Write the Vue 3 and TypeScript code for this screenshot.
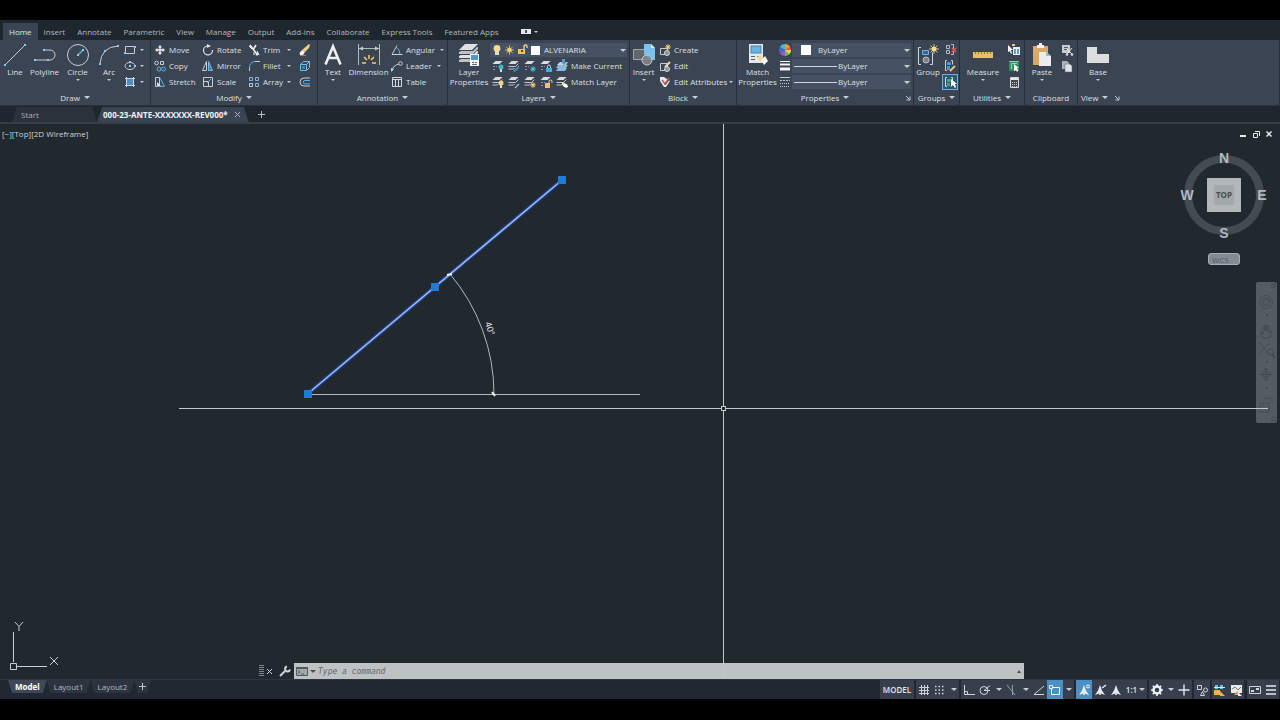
<script setup lang="ts">
import { h, ref } from 'vue'

interface Tool { icon: string; label?: string; title?: string; caret?: boolean; end?: boolean; active?: boolean }
interface Column { big?: { icon: string; lines: string[]; caret?: boolean }; rows?: Tool[][]; combos?: string[] }
interface Panel { name: string; cls: string; more?: boolean; launcher?: boolean; cols: Column[] }

const stack = '<path fill="#d9dcdf" d="M5.500 3h7l-3 3h-7z"/><path fill="none" stroke="#c3c7cb" d="M2.500 8.500h7l3-3M2.500 11h5l1-1"/>'
const leaf = '<path fill="#d9dcdf" d="M5.500 3h7l-3 3h-7z"/><path stroke="#8f969f" fill="none" d="M3 8.500h4M3 11.500h3" stroke-dasharray="2 1"/>'
const grips = (pts: number[][]) => pts.map(([x, y]) => `<rect x="${x - 1}" y="${y - 1}" width="2" height="2" fill="#8cc8f0"/>`).join('')
const sun = (x: number, y: number, r: number, c = '#f4cf6d') =>
  `<circle cx="${x}" cy="${y}" r="${r}" fill="${c}"/><path stroke="${c}" stroke-width=".800" d="M${x - r * 2} ${y}h${r * 4}M${x} ${y - r * 2}v${r * 4}M${x - r * 1.4} ${y - r * 1.4}l${r * 2.8} ${r * 2.8}M${x + r * 1.4} ${y - r * 1.4}l${-r * 2.8} ${r * 2.8}"/>`
const compassA = '<path fill="#e6eaee" d="M8 3L10 8.500L13 13L8.800 11.500V13H7.200V11.500L3 13L6 8.500z"/>'

const art: Record<string, string> = {
  line: '<path stroke="#c8cdd2" d="M2 22L22 2"/>' + grips([[2, 22], [22, 2]]),
  polyline: '<path stroke="#c8cdd2" fill="none" d="M2 17H17a5 5 0 0 0 0-10H11"/>' + grips([[2, 17], [15, 17], [11, 7]]),
  circle: '<circle cx="12" cy="12" r="10.500" stroke="#c8cdd2" fill="none"/><path stroke="#59b0e8" stroke-width="1.500" d="M12 12l5-5"/>' + grips([[12, 12], [17, 7]]),
  arc: '<path stroke="#c8cdd2" fill="none" d="M3 21Q4 4 21 3"/>' + grips([[3, 21], [8, 8], [21, 3]]),
  rect: '<path stroke="#c8cdd2" fill="none" d="M3.500 4.500h9v7h-9z"/>' + grips([[3, 11], [13, 5]]),
  ellipse: '<ellipse cx="8" cy="8" rx="5" ry="3.500" stroke="#c8cdd2" fill="none"/>' + grips([[8, 8], [13, 8], [8, 4]]),
  hatch: '<path fill="#4c8fc0" d="M5 5h6v6H5z"/><path stroke="#c8d8e4" fill="none" d="M4.500 3v10M11.500 3v10M3 4.500h10M3 11.500h10"/>',
  move: '<path stroke="#eef0f2" stroke-width="1.400" d="M8 4v8M4 8h8"/><path fill="#eef0f2" d="M8 3l2 2.500H6zM8 13l2-2.500H6zM3 8l2.500-2v4zM13 8l-2.500-2v4z"/>',
  copy: '<g fill="none" stroke="#c8cdd2"><circle cx="4.500" cy="5" r="1.800"/><path d="M8.500 3.500h3v3h-3z"/></g><g fill="none" stroke="#59b0e8"><circle cx="7" cy="11" r="2"/><circle cx="11.500" cy="11" r="2"/></g>',
  stretch: '<path fill="none" stroke="#c8cdd2" d="M3.500 3.500h4v9h-4z"/><path fill="none" stroke="#59b0e8" d="M8 4l4.500 8.500H5"/><path fill="#dfe3e6" d="M5 8l4 4H5z"/>',
  rotate: '<path fill="none" stroke="#dfe3e6" stroke-width="1.200" d="M12.500 8A4.500 4.500 0 1 1 7 4"/><path fill="#dfe3e6" d="M7 2l4 2-4 2z"/>',
  mirror: '<path fill="none" stroke="#c8cdd2" d="M6.500 3.500v9h-4z"/><path fill="#3b83bd" stroke="#78bde9" d="M8.500 3.500v9h4z"/>',
  scale: '<path fill="none" stroke="#c8cdd2" d="M3.500 3.500h9v9h-9z"/><path fill="none" stroke="#c8cdd2" d="M3.500 7.500h5v5"/><path stroke="#59b0e8" d="M7 9l4-4"/>',
  trim: '<path stroke="#eef0f2" stroke-width="1.600" fill="none" d="M4 3l6 8M10 3L7 8"/><path stroke="#eef0f2" fill="none" d="M3 4l3 3M8 10v3M11 9l2 4"/><circle cx="11" cy="12" r="1.500" fill="#eef0f2"/>',
  fillet: '<path fill="none" stroke="#c8cdd2" d="M3.500 13V9M9 3.500h5"/><path fill="none" stroke="#59b0e8" d="M3.500 10Q3.500 4 9 3.500"/>',
  array: '<g fill="none" stroke="#7eb9de"><path d="M3.500 3.500h3v3h-3zM9.500 3.500h3v3h-3zM9.500 9.500h3v3h-3z"/><path stroke="#c8cdd2" d="M3.500 9.500h3v3h-3z"/></g>',
  erase: '<path fill="#f3d081" d="M12 2l1 1-1 3-4 4-3-2z"/><path fill="#f6f2ec" d="M5 8l3 2-2 3H3l-.500-2z"/><path stroke="#d96a4d" d="M3 13.500h6"/>',
  explode: '<path fill="none" stroke="#78bde9" d="M3.500 6.500h6v6h-6zM3.500 6.500l3-3h6l-3 3M12.500 3.500v6l-3 3"/><path fill="#3b83bd" d="M5 8h3v3H5z"/>',
  offset: '<path fill="none" stroke="#c8cdd2" d="M13 4H7a4 4 0 0 0 0 8h6"/><path fill="none" stroke="#59b0e8" d="M13 6.500H8a1.700 1.700 0 0 0 0 3.400h5"/>',
  text: '<path fill="none" stroke="#eef0f2" stroke-width="2.600" d="M4.500 21.500L12 3.500L19.500 21.500M7 15h10"/>',
  dimension: '<path stroke="#a9c3b0" fill="none" d="M1.500 1v21M22.500 1v21M2 5.500h20"/><path fill="#c8cdd2" d="M2 5.500l4-2v4zM22 5.500l-4-2v4z"/><path stroke="#f4cf6d" stroke-width="1.500" d="M5 20h4M19 20h-4M7 14l3 3M17 14l-3 3M12 12v4"/>',
  angular: '<path fill="none" stroke="#c8cdd2" d="M13.500 12.500H3l5-9"/><path fill="none" stroke="#59b0e8" d="M7 5Q11 7 11 12"/>',
  leader: '<path fill="none" stroke="#c8cdd2" d="M3 13Q4 7 10 6"/><circle cx="11.500" cy="5.500" r="1.800" fill="none" stroke="#c8cdd2"/><path fill="#c8cdd2" d="M2 14V10l3 1z"/>',
  table: '<path fill="none" stroke="#d5d9dc" d="M3.500 3.500h9v9h-9zM3.500 5.500h9M6.500 5.500v7M9.500 5.500v7"/>',
  layerprops: '<path fill="#dfe1e3" d="M8 1h13l-6 6H2z"/><path fill="#bec2c6" d="M2 9l2-1h12l4-4h1v2l-5 5H2z"/><path fill="#dfe1e3" d="M2 13l2-1h12l4-4h1v2l-5 5H2z"/><path fill="#bec2c6" d="M2 17l2-1h9v3H2z"/><rect x="13" y="11" width="9" height="12" fill="#f3f5f6"/><rect x="14" y="12" width="7" height="5" fill="#4b9bd3"/><path stroke="#65717c" d="M15 19.500h2M18 19.500h2M15 21.500h5"/>',
  bulb: '<circle cx="7" cy="6.500" r="3.400" fill="#f7dc8b"/><path fill="#f7dc8b" d="M5 9h4v2H5z"/><path fill="#d8d8d4" d="M5 11h4v2H5z"/>',
  sun: sun(6.5, 8, 2.3),
  unlock: '<path fill="#f2c35d" d="M2 7h7v5H2z"/><path stroke="#f2d48c" stroke-width="1.300" fill="none" d="M8 7V4.500a1.500 1.500 0 0 1 3 0V6"/><path fill="#4e4636" d="M5 8h2v2H5z"/>',
  layoff: leaf + '<circle cx="11" cy="9" r="2.500" fill="#35b7d6"/><path fill="#d9dcdf" d="M10 11h2v3h-2z"/>',
  layiso: stack + '<path fill="#3f89bd" d="M7 13l6-6v3l-4 4z"/>',
  layfrz: leaf + sun(11, 11, 1.500, '#42c5dc'),
  laylock: leaf + '<path fill="#37b4e0" d="M8 10h6v4H8z"/><path stroke="#b7e1f0" fill="none" d="M9.500 10V8.500a1.500 1.500 0 0 1 3 0V10"/>',
  makecur: '<path fill="#8ab9db" d="M4 10h9l-2 3H2zM4 7h10l-2 3H2z"/><path fill="#c6d3dd" d="M6 4h8l-2 3H3z"/><path fill="#5297c7" d="M8 1h3v3h2l-3 3-3-3h1z"/>',
  layon: stack + '<circle cx="11" cy="9" r="2.500" fill="#f7d577"/><path fill="#d9dcdf" d="M10 11h2v3h-2z"/>',
  layuniso: stack + '<path stroke="#85bde2" stroke-width="1.500" d="M9 14l4-4"/>',
  laythaw: stack + sun(11, 11, 1.500),
  layunlock: leaf + '<path fill="#f2c35d" d="M7 9h5v5H7z"/><path stroke="#f2d48c" fill="none" d="M11 9V7.500a1.500 1.500 0 0 1 3 0V9"/>',
  matchlay: stack + '<path fill="#f3e3b5" d="M8 8l3 1 3 4-2 1-4-3z"/><path fill="#fff" d="M9 11l4-1 1 3h-4z"/>',
  insert: '<path fill="#62666d" stroke="#a3a7ac" d="M1.500 6.500h15v10h-15z"/><path fill="#7cc0ee" d="M12 1h7l4 4v12h-5l-6-6z"/><path fill="#d7e9f5" d="M19 1l4 4h-4z"/><circle cx="15" cy="17" r="5" fill="#83878c" fill-opacity=".85" stroke="#c8cbce"/>',
  create: '<path fill="none" stroke="#c8cdd2" d="M3.500 6.500h7v6h-7z"/><circle cx="10" cy="11" r="2.500" fill="#8c9299" stroke="#d2d5d8"/>' + sun(11, 5, 1.5),
  edit: '<path fill="none" stroke="#c8cdd2" d="M3.500 5.500h7v7h-7z"/><circle cx="10" cy="11" r="2.500" fill="#8c9299" stroke="#d2d5d8"/><path stroke="#ead9ae" stroke-width="2" d="M8 9l5-5"/>',
  attrs: '<path fill="#e9ebed" d="M3 3h4l6 4-4 6H7L3 7z"/><path stroke="#bf5a4a" stroke-width="1.500" fill="none" d="M5 6l3 4 4-6"/><path stroke="#4b515b" d="M8 11l4-5"/>',
  matchprop: '<rect x="3" y="1" width="14" height="19" fill="#e5e8ea"/><rect x="5" y="3" width="10" height="7" fill="#69b4e6" stroke="#4585b0"/><path stroke="#59636d" d="M5 13.500h4M11 13.500h4M5 16.500h4"/><path fill="#f2d48c" d="M11 14l3-2 4 4-3 3z"/><path fill="#fafafa" d="M15 17l4-4 3 5-4 4z"/>',
  wheel: '<path fill="#ef4f45" d="M7 7L12 3.700A6 6 0 0 1 13 7z"/><path fill="#f39b31" d="M7 7V1a6 6 0 0 1 5.200 3z"/><path fill="#43b8e1" d="M7 7L1.800 4A6 6 0 0 1 7 1z"/><path fill="#3f6fd5" d="M7 7l-5.200 3a6 6 0 0 1 0-6z"/><path fill="#a156c4" d="M7 7v6a6 6 0 0 1-5.200-3z"/><path fill="#63bf55" d="M7 7h6a6 6 0 0 1-6 6z"/><path fill="#efd84b" d="M7 7h6a6 6 0 0 1-1.500 4z"/>',
  weights: '<path stroke="#f0f2f4" d="M2 2.500h10"/><path fill="#f0f2f4" d="M2 4.500h10v2H2zM2 8.500h10v3H2z"/>',
  types: '<path stroke="#c1c6cb" d="M2 2.500h10"/><path stroke="#c1c6cb" stroke-dasharray="2 1" d="M2 5.500h10"/><path stroke="#c1c6cb" stroke-dasharray="1 1" d="M2 8.500h10M2 11.500h10"/>',
  group: '<path fill="none" stroke="#d0d4d8" d="M5 4.500H2.500v17H5M14 21.500h2.500v-12"/><path fill="#31689b" stroke="#71b3df" d="M6.500 7.500h6v4h-6z"/><circle cx="10" cy="17" r="3" fill="#7c828a" stroke="#b9bec3"/>' + sun(18, 6, 2.5, '#f6d98c'),
  ungroup: '<path fill="none" stroke="#b8bdc3" d="M4.500 3.500h3v3h-3zM4.500 8.500h3v3h-3zM9 2.500h2.500v10H9"/><path stroke="#e35750" stroke-width="1.500" d="M10 6l4 4M14 6l-4 4"/>',
  groupedit: '<path fill="none" stroke="#c8cdd2" d="M5 2.500H3.500v10H5M9 2.500h1.500v4"/><path fill="#4b97cf" d="M5 4h4v3H5zM5 8h3v4H5z"/><path stroke="#f2c377" stroke-width="2" d="M8 13l5-5"/>',
  groupsel: '<path fill="none" stroke="#bde0d2" d="M5 3.500H3.500v9H5M9 3.500h1.500v3"/><path fill="#43a579" d="M5 5h4v3H5zM5 9h3v3H5z"/><path fill="#fff" d="M9 5v8l2-2 2 3 1-1-1-3h2z"/>',
  ruler: '<path fill="#e9bf6a" d="M2 9h20v6H2z"/><path stroke="#9b7432" d="M4.500 9v2M7.500 9v2M10.500 9v2M13.500 9v2M16.500 9v2M19.500 9v2"/>',
  quickcalc: '<path fill="#e9edef" d="M7 5h7v8H7z"/><path fill="#5b9fce" d="M8 7h2v5H8zM11 7h2v5h-2z"/><path fill="#fff" d="M2 3v7l2-1 1 3 1-1-1-3h2z"/><path stroke="#f2c774" stroke-width="2" d="M6 3h3"/>',
  selectall: '<path fill="#2f8f61" d="M3 3h10v10H3z"/><path fill="none" stroke="#8edab5" d="M5.500 11V5.500H11M3.500 3.500h9"/><path fill="#fff" d="M8 6v7l2-1 1 2 1-1-1-3h2z"/>',
  calc: '<path fill="#42484f" stroke="#d5d9dc" d="M4.500 3.500h8v10h-8z"/><path fill="#e8ebed" d="M5 4h7v2H5z"/><path stroke="#c3c8cd" stroke-dasharray="1 1" d="M6 8.500h6M6 10.500h6M6 12.500h6"/>',
  paste: '<path fill="#dca868" d="M3 3h15v19H3z"/><path fill="#f0f1f2" d="M7 2h7v3H7zM9 0h3v3H9z"/><path fill="#e9edef" d="M9 9h7l5 4v10H9z"/><path fill="#aab3bb" d="M16 9l5 4h-5z"/>',
  cut: '<path fill="#c9cdd1" d="M3 3h8v8H3z"/><path stroke="#525a66" d="M5 5.500h4M5 7.500h4"/><path stroke="#e4e7e9" d="M8 7l5 5M13 6l-5 6"/><circle cx="8" cy="12.500" r="1.300" fill="#d5d9dc"/><circle cx="13" cy="12.500" r="1.300" fill="#d5d9dc"/>',
  copyclip: '<path fill="#aeb3b9" d="M3 3h5l2 2v6H3z"/><path fill="#e1e4e6" stroke="#5b6370" stroke-width=".500" d="M6 6h5l2 2v6H6z"/>',
  base: '<path fill="#dcdee0" d="M1 4h10v7h12v9H1z"/>',
  gridlines: '<path stroke="#cfd4d9" d="M5.500 3v10M8.500 3v10M11.500 3v10M3 5.500h10M3 8.500h10M3 11.500h10"/>',
  dots: '<path stroke="#cfd4d9" stroke-width="1.500" stroke-dasharray="1.500 2" d="M3 4.500h10M3 8h10M3 11.500h10"/>',
  ortho: '<path stroke="#cfd4d9" fill="none" d="M3.500 3v9.500H14M3.500 9.500h3v3"/>',
  polar: '<circle cx="7" cy="8.500" r="4" stroke="#cfd4d9" fill="none"/><path stroke="#cfd4d9" fill="none" d="M7 8.500l6-5M7 8.500h6"/>',
  iso: '<path stroke="#98a1ab" fill="none" d="M3 3l8 10M8.500 3v10"/><path stroke="#6cab80" d="M8.500 5v4"/>',
  angle: '<path stroke="#cfd4d9" fill="none" d="M13 12.500H3L13 4"/>',
  osnap: '<path stroke="#fff" fill="none" d="M4.500 5.500h8v7h-8z"/><path fill="#4b8bbd" stroke="#d8ecfb" d="M2.500 3.500h3v3h-3z"/>',
  anno: compassA + '<circle cx="12" cy="4.500" r="1.500" fill="none" stroke="#fff"/>',
  annoauto: compassA + '<path stroke="#e6eaee" stroke-width="1.500" d="M10 6l4-3"/>',
  annoscale: compassA,
  gear: '<circle cx="8" cy="8" r="3.500" fill="none" stroke="#eef0f2" stroke-width="2.500"/><path stroke="#eef0f2" stroke-width="1.600" d="M8 2v2M8 12v2M2 8h2M12 8h2M3.800 3.800l1.400 1.400M10.800 10.800l1.400 1.400M12.200 3.800l-1.400 1.400M5.200 10.800l-1.400 1.400"/>',
  plus: '<path stroke="#e6eaee" stroke-width="1.400" d="M8 2.500v11M2.500 8h11"/>',
  isolate: '<path fill="none" stroke="#cfd4d9" d="M3.500 3.500h4v4h-4zM6.500 13.500l2-4 2 4z"/><circle cx="11.500" cy="8" r="2" fill="none" stroke="#cfd4d9"/>',
  hardware: '<path fill="#71b8e3" d="M3 3h3v4H3zM8 3h3v4H8z"/><path stroke="#dfe7ec" d="M2 5.500h11"/><path fill="#f0b642" d="M2 8h6v5H2zM8 9l5 5H8z"/>',
  clean: '<path fill="#e9ebed" d="M3 3h11v8H3z"/><path fill="none" stroke="#6e7883" d="M4 7l3-2 3 3 3-3"/><path fill="#e19b57" d="M6 13l3-4 3 4z"/><path fill="#f0efed" d="M10 10l4 4h-4z"/>',
  screen: '<path fill="none" stroke="#cfd4d9" d="M2.500 4.500h11v7h-11z"/><path fill="#cfd4d9" d="M4 8h3v2H4zM9 6h3v2H9z"/>',
  menu: '<path stroke="#e6eaee" stroke-width="1.500" d="M3 4h10M3 8h10M3 12h10"/>',
  wrench: '<path stroke="#d0d4d8" stroke-width="2" d="M3 13l5-5"/><path fill="none" stroke="#d0d4d8" stroke-width="2" d="M10 3.500a2.500 2.500 0 1 0 3 3"/>',
  prompt: '<path fill="#a4a8aa" stroke="#54595c" d="M2.500 4.500h11v8h-11z"/><path fill="#54595c" d="M2 4h12v2H2z"/><path stroke="#54595c" fill="none" d="M4 7.500l2 1.500-2 1.500M7 11h3"/>',
}

const Icon = (p: { name: string; size?: number; w?: number }) =>
  h('svg', { width: p.w ?? p.size ?? 16, height: p.size ?? 16, viewBox: `0 0 ${p.w ?? p.size ?? 16} ${p.size ?? 16}`, 'aria-hidden': 'true', innerHTML: art[p.name] })
Icon.props = ['name', 'size', 'w']

const menus = ['Home', 'Insert', 'Annotate', 'Parametric', 'View', 'Manage', 'Output', 'Add-ins', 'Collaborate', 'Express Tools', 'Featured Apps']
const activeMenu = ref('Home')

const panels: Panel[] = [
  { name: 'Draw', cls: 'draw', more: true, cols: [
    { big: { icon: 'line', lines: ['Line'] } },
    { big: { icon: 'polyline', lines: ['Polyline'] } },
    { big: { icon: 'circle', lines: ['Circle'], caret: true } },
    { big: { icon: 'arc', lines: ['Arc'], caret: true } },
    { rows: [[{ icon: 'rect', title: 'Rectangle', caret: true }], [{ icon: 'ellipse', title: 'Ellipse', caret: true }], [{ icon: 'hatch', title: 'Hatch', caret: true }]] },
  ] },
  { name: 'Modify', cls: 'modify', more: true, cols: [
    { rows: [[{ icon: 'move', label: 'Move' }], [{ icon: 'copy', label: 'Copy' }], [{ icon: 'stretch', label: 'Stretch' }]] },
    { rows: [[{ icon: 'rotate', label: 'Rotate' }], [{ icon: 'mirror', label: 'Mirror' }], [{ icon: 'scale', label: 'Scale' }]] },
    { rows: [[{ icon: 'trim', label: 'Trim', caret: true, end: true }], [{ icon: 'fillet', label: 'Fillet', caret: true, end: true }], [{ icon: 'array', label: 'Array', caret: true, end: true }]] },
    { rows: [[{ icon: 'erase', title: 'Erase' }], [{ icon: 'explode', title: 'Explode' }], [{ icon: 'offset', title: 'Offset' }]] },
  ] },
  { name: 'Annotation', cls: 'annotation', more: true, cols: [
    { big: { icon: 'text', lines: ['Text'], caret: true } },
    { big: { icon: 'dimension', lines: ['Dimension'] } },
    { rows: [[{ icon: 'angular', label: 'Angular', caret: true }], [{ icon: 'leader', label: 'Leader', caret: true }], [{ icon: 'table', label: 'Table' }]] },
  ] },
  { name: 'Layers', cls: 'layers', more: true, cols: [
    { big: { icon: 'layerprops', lines: ['Layer', 'Properties'] } },
    { combos: ['layer'], rows: [
      [{ icon: 'layoff', title: 'Off' }, { icon: 'layiso', title: 'Isolate' }, { icon: 'layfrz', title: 'Freeze' }, { icon: 'laylock', title: 'Lock' }, { icon: 'makecur', label: 'Make Current' }],
      [{ icon: 'layon', title: 'Turn on' }, { icon: 'layuniso', title: 'Unisolate' }, { icon: 'laythaw', title: 'Thaw' }, { icon: 'layunlock', title: 'Unlock' }, { icon: 'matchlay', label: 'Match Layer' }],
    ] },
  ] },
  { name: 'Block', cls: 'block', more: true, cols: [
    { big: { icon: 'insert', lines: ['Insert'], caret: true } },
    { rows: [[{ icon: 'create', label: 'Create' }], [{ icon: 'edit', label: 'Edit' }], [{ icon: 'attrs', label: 'Edit Attributes', caret: true, end: true }]] },
  ] },
  { name: 'Properties', cls: 'properties', more: true, launcher: true, cols: [
    { big: { icon: 'matchprop', lines: ['Match', 'Properties'] } },
    { combos: ['color', 'weight', 'type'] },
  ] },
  { name: 'Groups', cls: 'groups', more: true, cols: [
    { big: { icon: 'group', lines: ['Group'] } },
    { rows: [[{ icon: 'ungroup', title: 'Ungroup' }], [{ icon: 'groupedit', title: 'Group edit' }], [{ icon: 'groupsel', title: 'Group selection', active: true }]] },
  ] },
  { name: 'Utilities', cls: 'utilities', more: true, cols: [
    { big: { icon: 'ruler', lines: ['Measure'], caret: true } },
    { rows: [[{ icon: 'quickcalc', title: 'Quick select' }], [{ icon: 'selectall', title: 'Select all' }], [{ icon: 'calc', title: 'Calculator' }]] },
  ] },
  { name: 'Clipboard', cls: 'clipboard', cols: [
    { big: { icon: 'paste', lines: ['Paste'], caret: true } },
    { rows: [[{ icon: 'cut', title: 'Cut' }], [{ icon: 'copyclip', title: 'Copy clip' }]] },
  ] },
  { name: 'View', cls: 'view', more: true, launcher: true, cols: [{ big: { icon: 'base', lines: ['Base'], caret: true } }] },
]

const propIcon: Record<string, string> = { color: 'wheel', weight: 'weights', type: 'types' }
const layouts = ['Model', 'Layout1', 'Layout2']
const activeLayout = ref('Model')
const command = ref('')

interface Status { icon?: string; text?: string; title: string; on?: boolean; caret?: boolean }
const status: Status[][] = [
  [{ text: 'MODEL', title: 'Model space' }],
  [{ icon: 'gridlines', title: 'Grid' }, { icon: 'dots', title: 'Snap' }, { caret: true, title: 'Snap options' }],
  [{ icon: 'ortho', title: 'Ortho' }, { icon: 'polar', title: 'Polar tracking' }, { caret: true, title: 'Polar options' }, { icon: 'iso', title: 'Isometric drafting' }, { caret: true, title: 'Isometric options' }, { icon: 'angle', title: 'Snap tracking' }, { icon: 'osnap', title: 'Object snap', on: true }, { caret: true, title: 'Object snap options' }],
  [{ icon: 'anno', title: 'Annotation visibility', on: true }, { icon: 'annoauto', title: 'Auto scale' }, { icon: 'annoscale', title: 'Annotation scale' }, { text: '1:1', title: 'Scale', caret: true }],
  [{ icon: 'gear', title: 'Workspace' }, { caret: true, title: 'Workspace options' }, { icon: 'plus', title: 'Annotation monitor' }],
  [{ icon: 'isolate', title: 'Isolate objects' }],
  [{ icon: 'hardware', title: 'Hardware acceleration' }, { icon: 'clean', title: 'Trusted files' }],
  [{ icon: 'screen', title: 'Clean screen' }, { icon: 'menu', title: 'Customization' }],
]
</script>

<template>
  <div class="app">
    <nav class="menubar" aria-label="Ribbon tabs">
      <button v-for="m in menus" :key="m" :class="{ on: m === activeMenu }" @click="activeMenu = m">{{ m }}</button>
      <button class="ribbon-toggle" aria-label="Minimize ribbon"><span class="pill"></span><i class="caret tiny"></i></button>
    </nav>

    <header class="ribbon">
      <section v-for="p in panels" :key="p.name" class="panel" :class="p.cls">
        <div class="tools">
          <template v-for="(c, ci) in p.cols" :key="ci">
            <button v-if="c.big" class="big">
              <Icon :name="c.big.icon" :size="24" />
              <span v-for="l in c.big.lines" :key="l">{{ l }}</span>
              <i v-if="c.big.caret" class="caret tiny"></i>
            </button>
            <div v-else class="stack">
              <template v-for="k in c.combos ?? []" :key="k">
                <div v-if="k === 'layer'" class="combo">
                  <Icon name="bulb" :size="16" :w="13" /><Icon name="sun" :size="16" :w="13" /><Icon name="unlock" :size="16" :w="13" />
                  <span class="swatch"></span>
                  <select aria-label="Layer"><option>ALVENARIA</option></select>
                  <i class="caret"></i>
                </div>
                <div v-else class="prop">
                  <Icon :name="propIcon[k]" :size="14" />
                  <div class="combo" :class="k">
                    <span v-if="k === 'color'" class="swatch"></span>
                    <span v-else class="stroke"></span>
                    <select :aria-label="k"><option>ByLayer</option></select>
                    <i class="caret"></i>
                  </div>
                </div>
              </template>
              <div v-for="(r, ri) in c.rows ?? []" :key="ri" class="row">
                <button v-for="t in r" :key="t.icon" class="tool" :class="{ active: t.active, wide: t.end }" :aria-label="t.label ?? t.title">
                  <Icon :name="t.icon" />
                  <span v-if="t.label">{{ t.label }}</span>
                  <i v-if="t.caret" class="caret tiny" :class="{ end: t.end }"></i>
                </button>
              </div>
            </div>
          </template>
        </div>
        <footer class="caption">
          <button>{{ p.name }}<i v-if="p.more" class="caret"></i></button>
          <button v-if="p.launcher" class="launcher" :aria-label="p.name + ' settings'">
            <svg width="6" height="6" viewBox="0 0 6 6"><path d="M1 1l3 3M5 1.500V5H1.500" fill="none" stroke="#c8cdd2" /></svg>
          </button>
        </footer>
      </section>
    </header>

    <div class="files">
      <button class="file start">Start</button>
      <div class="file open">
        <button>000-23-ANTE-XXXXXXX-REV000*</button>
        <button class="close" aria-label="Close drawing"><svg width="7" height="7" viewBox="0 0 7 7"><path d="M1 1l5 5M6 1L1 6" stroke="#aab0b7" /></svg></button>
      </div>
      <button class="new" aria-label="New drawing"><svg width="7" height="7" viewBox="0 0 7 7"><path d="M3.500 0v7M0 3.500h7" stroke="#b9bec4" /></svg></button>
    </div>

    <main class="canvas">
      <div class="navbar">
        <svg width="21" height="141" viewBox="0 0 21 141" fill="none" stroke="#464e54">
          <circle cx="10" cy="20" r="6.500" /><circle cx="10" cy="20" r="3.500" /><circle cx="17.500" cy="4" r="2" />
          <path d="M4 50l2 6h7l3-6-2-1-1 2v-7h-2v5-6H9v6-5H7v8l-2-1z" />
          <path d="M4 61l9 11M13 61L4 72" /><circle cx="14.500" cy="70" r="3" /><path d="M16 72l3 4" stroke-width="2" />
          <path d="M10 86v13M3.500 92.500h13M8 88l2-2 2 2M8 97l2 2 2-2M7 90h6v5H7z" />
          <path d="M4 121h9v9H4zM8 116h8v5M6 124h3" /><circle cx="17.500" cy="137" r="2" />
          <path d="M10 33h2M10 80h2M10 106h2" stroke-width="2" />
        </svg>
      </div>

      <div class="viewctl">
        <button>[−]</button><button>[Top]</button><button>[2D Wireframe]</button>
      </div>

      <div class="winctl">
        <button aria-label="Minimize"><svg width="8" height="8" viewBox="0 0 8 8"><path d="M1 6h6" stroke="#e8eaec" stroke-width="2" /></svg></button>
        <button aria-label="Restore"><svg width="8" height="8" viewBox="0 0 8 8"><path d="M1.500 3.500h4v4h-4zM3 1.500h4.500V6" fill="none" stroke="#e8eaec" /></svg></button>
        <button aria-label="Close"><svg width="8" height="8" viewBox="0 0 8 8"><path d="M1.500 1.500l5 5M6.500 1.500l-5 5" stroke="#e8eaec" stroke-width="1.500" /></svg></button>
      </div>

      <div class="viewcube">
        <svg width="92" height="92" viewBox="0 0 92 92">
          <circle cx="46" cy="46" r="36" fill="none" stroke="#434b53" stroke-width="8" />
          <path fill="#b4b7b9" d="M29 29h34v34H29z" />
          <path fill="#a3a8ab" d="M36 36h20v20H36z" />
          <g class="dirs"><text x="46" y="14">N</text><text x="46" y="89">S</text><text x="9" y="51">W</text><text x="84" y="51">E</text></g>
          <text x="46" y="49" class="top">TOP</text>
        </svg>
        <button class="wcs">WCS</button>
      </div>

      <svg class="ucs" width="64" height="52" viewBox="0 0 64 52" fill="none" stroke="#c9ced2">
        <path d="M13.500 12v30M17 46.500h30M10.500 43.500h6v6h-6z" />
        <path d="M15 2l4 4.500L23 2M19 6.500V11M50 37l8 8M58 37l-8 8" />
      </svg>

      <form class="command" @submit.prevent>
        <i class="handle"></i>
        <button type="button" aria-label="Close command line"><svg width="7" height="7" viewBox="0 0 7 7"><path d="M1 1l5 5M6 1L1 6" stroke="#d0d4d8" /></svg></button>
        <button type="button" aria-label="Customize"><Icon name="wrench" /></button>
        <label class="field">
          <Icon name="prompt" /><i class="caret dark"></i>
          <input v-model="command" type="text" placeholder="Type a command" aria-label="Command" />
          <i class="caret dark up"></i>
        </label>
      </form>

      <svg class="drawing" role="img" aria-label="Angle of 40 degrees between two lines">
        <path d="M308 270.500H640" class="geo" />
        <path d="M307.500 270L562 56" class="glow" />
        <path d="M307.500 270L562 56" class="selected" />
        <path d="M450 150A187 187 0 0 1 494 270" class="dim" />
        <path d="M447 151l5-1M492 268l3 4" class="tick" />
        <text x="0" y="0" transform="translate(485 199) rotate(72)" class="dimtext">40°</text>
        <rect v-for="[x, y] in [[304, 266], [431, 159], [558, 52]]" :key="x" :x="x" :y="y" width="8" height="8" fill="#1f7bd4" />
        <path d="M179 284.500H721M726 284.500H1268M723.500 0V282M723.500 287V555" class="cross" />
        <rect x="721.500" y="282.500" width="4" height="4" class="cross" />
      </svg>
    </main>

    <footer class="bottom">
      <div class="layouts">
        <button v-for="l in layouts" :key="l" class="layout" :class="{ on: l === activeLayout }" @click="activeLayout = l">{{ l }}</button>
        <button class="layout add" aria-label="New layout"><svg width="7" height="7" viewBox="0 0 7 7"><path d="M3.500 0v7M0 3.500h7" stroke="#c3c8cd" /></svg></button>
      </div>
      <div class="status">
        <div v-for="(g, gi) in status" :key="gi" class="cluster">
          <button v-for="s in g" :key="s.title" :class="{ on: s.on, drop: s.caret && !s.text, word: s.text }" :aria-label="s.title">
            <Icon v-if="s.icon" :name="s.icon" />{{ s.text }}<i v-if="s.caret" class="caret"></i>
          </button>
        </div>
      </div>
    </footer>
  </div>
</template>

<style>
body { background: #000; }
</style>

<style scoped>
* { box-sizing: border-box; }
.app {
  display: flex;
  flex-direction: column;
  min-height: 100vh;
  padding: 20px 0 21px;
  background: #000;
  color: #dde0e4;
  font: 8px/10px "Open Sans", "Noto Sans", sans-serif;
  overflow: hidden;
}
button, input, select {
  margin: 0;
  padding: 0;
  border: 0;
  background: none;
  color: inherit;
  font: inherit;
  white-space: nowrap;
}
svg { display: block; flex: none; }

.caret {
  flex: none;
  width: 0;
  height: 0;
  border: 3px solid transparent;
  border-top-color: #c8cdd3;
  border-bottom: 0;
}
.caret.tiny { border-width: 2px; border-bottom: 0; }
.caret.dark { border-top-color: #4d5255; }
.caret.up { border: 2px solid transparent; border-bottom: 3px solid #4d5255; border-top: 0; }

.menubar { display: flex; height: 20px; padding: 3px 0 0 3px; background: #1f272e; color: #b2b8bf; }
.menubar button { height: 17px; padding: 0 6px; }
.menubar .on { background: #3b4453; color: #e2e5e8; }
.menubar .ribbon-toggle { display: flex; align-items: center; gap: 3px; margin-left: 10px; }
.pill { width: 10px; height: 5px; border: 1px solid #e5e8ea; background: linear-gradient(90deg, #e5e8ea 3px, #4c5663 3px, #4c5663 5px, #e5e8ea 5px); }

.ribbon { display: flex; background: #3b4453; border-bottom: 1px solid #2a323c; }
.panel { flex: none; border-right: 1px solid #272f39; }
.tools { display: grid; height: 50px; padding-top: 2px; }
.draw { width: 151px; }
.draw .tools { grid-template-columns: 30px 29px 37px 26px 1fr; }
.modify { width: 167px; }
.modify .tools { grid-template-columns: 48px 46px 51px 1fr; padding-left: 1px; }
.annotation { width: 130px; }
.annotation .tools { grid-template-columns: 30px 41px 1fr; }
.layers { width: 182px; }
.layers .tools { grid-template-columns: 42px 1fr; padding-right: 2px; }
.block { width: 107px; }
.block .tools { grid-template-columns: 27px 1fr; }
.properties { width: 177px; }
.properties .tools { grid-template-columns: 41px 1fr; padding-right: 2px; }
.groups { width: 46px; }
.groups .tools { grid-template-columns: 28px 1fr; }
.utilities { width: 65px; }
.utilities .tools { grid-template-columns: 46px 1fr; }
.clipboard { width: 53px; }
.clipboard .tools { grid-template-columns: 34px 1fr; }
.view { flex: 1; }
.view .tools { grid-template-columns: 40px; }

.big { display: flex; flex-direction: column; align-items: center; min-width: 0; padding-top: 1px; }
.big .caret { margin-top: 2px; }
.stack { display: flex; flex-direction: column; min-width: 0; }
.row { display: flex; height: 16px; }
.tool { display: flex; align-items: center; gap: 1px; height: 16px; }
.tool .caret { margin: 0 2px 0 4px; }
.tool .caret.end { margin: 0 6px 0 auto; }
.block .tool .caret.end { margin-right: 3px; }
.draw .tool .caret { margin-left: 1px; }
.tool.wide { width: 100%; }
.tool.active { background: #2e5876; box-shadow: inset 0 0 0 1px #6fb0db; }

.combo { display: flex; align-items: center; flex: 1; min-width: 0; height: 14px; margin: 1px 0; padding-right: 1px; background: #465163; }
.combo select { flex: 1; min-width: 0; height: 14px; appearance: none; padding: 0; }
.combo option { color: #000; }
.layers .combo { flex: none; }
.swatch { width: 9px; height: 9px; margin: 0 4px 0 2px; background: #fff; }
.color .swatch { width: 10px; height: 10px; margin: 0 7px 0 9px; }
.stroke { width: 43px; height: 1px; margin: 0 1px 0 2px; background: #d3d7dc; }
.prop { display: flex; align-items: center; height: 16px; }

.caption { display: flex; align-items: center; justify-content: center; position: relative; height: 15px; }
.caption button { display: flex; align-items: center; gap: 4px; }
.caption .launcher { position: absolute; right: 2px; }
.view .caption { justify-content: flex-start; gap: 6px; padding-left: 3px; }
.view .caption .launcher { position: static; }

.files { display: flex; align-items: flex-end; height: 18px; padding: 0 0 0 12px; background: #1f272e; border-bottom: 2px solid #343d48; color: #aab0b7; }
.file { height: 15px; background: #2a323c; clip-path: polygon(5px 0, calc(100% - 5px) 0, 100% 100%, 0 100%); }
.file.start { width: 85px; padding-left: 9px; text-align: left; }
.file.open { display: flex; align-items: center; gap: 6px; padding: 0 8px 0 6px; background: #3b4453; color: #f0f2f4; font-weight: 700; }
.new { width: 22px; height: 15px; padding-left: 9px; }

.canvas { position: relative; flex: 1; min-height: 300px; background: #21282e; overflow: hidden; }
.drawing { position: absolute; inset: 0; width: 100%; height: 100%; pointer-events: none; }
.geo, .dim { fill: none; stroke: #b4b8bb; }
.tick { fill: none; stroke: #eef0f2; stroke-width: 2; }
.glow { stroke: #1f4390; stroke-width: 4; }
.selected { stroke: #a4bdf0; stroke-width: 1.5; }
.cross { fill: none; stroke: #c3c7ca; }
.dimtext { fill: #e0e3e5; font: 9px "Liberation Sans", sans-serif; }

.viewctl { position: absolute; top: 5px; left: 2px; display: flex; color: #d0d4d8; }
.winctl { position: absolute; top: 6px; right: 7px; display: flex; gap: 5px; }
.viewcube { position: absolute; top: 25px; right: 10px; display: flex; flex-direction: column; align-items: center; }
.dirs { fill: #b4b8bb; font: 700 14px "Liberation Sans", sans-serif; text-anchor: middle; }
.top { fill: #444b52; font: 700 8px "Open Sans", sans-serif; text-anchor: middle; }
.wcs { width: 32px; height: 12px; margin-top: 12px; padding-left: 3px; border: 1px solid #a9adb5; border-radius: 3px; background: #858a93; color: #555c66; line-height: 9px; text-align: left; }
.navbar { position: absolute; top: 158px; right: 3px; border-radius: 2px; background: #5b6267; opacity: .9; }
.ucs { position: absolute; left: 0; bottom: 7px; }

.command { position: absolute; right: 20%; bottom: 0; left: 20%; display: flex; align-items: center; height: 16px; padding-left: 3px; }
.handle { width: 5px; height: 12px; margin-right: 2px; background: repeating-linear-gradient(#7b8289 0 1px, #21282e 1px 2px); }
.command button { margin-right: 4px; }
.command button + button { margin-right: 1px; }
.field { display: flex; flex: 1; align-items: center; height: 16px; padding: 0 3px 0 0; background: #bec2c3; }
.field input { flex: 1; min-width: 0; height: 16px; margin-left: 2px; padding-top: 1px; outline: 0; color: #33393d; font: italic 8px/14px "DejaVu Sans Mono", monospace; }
.field input::placeholder { color: #62686b; opacity: 1; }

.bottom { display: flex; align-items: flex-start; justify-content: space-between; height: 20px; background: #202932; border-top: 1px solid #2d3640; }
.layouts { display: flex; padding-left: 8px; }
.layout { height: 13px; padding: 0 7px; background: #2c343f; clip-path: polygon(0 0, 100% 0, calc(100% - 4px) 100%, 4px 100%); color: #b3b9c0; }
.layout.on { background: #3f4857; color: #fff; font-weight: 700; }
.layout.add { padding: 0 5px; }
.status { display: flex; gap: 2px; padding-right: 1px; }
.cluster { display: flex; background: #373f4d; }
.cluster:last-child { margin-left: 1px; }
.status button { display: flex; align-items: center; justify-content: center; width: 16px; height: 19px; color: #e2e5e8; }
.status .drop { width: 11px; }
.status .word { gap: 2px; width: 23px; font-weight: 600; }
.status .cluster:first-child .word { width: 34px; }
.status .on { background: #4c8fc2; }
</style>
